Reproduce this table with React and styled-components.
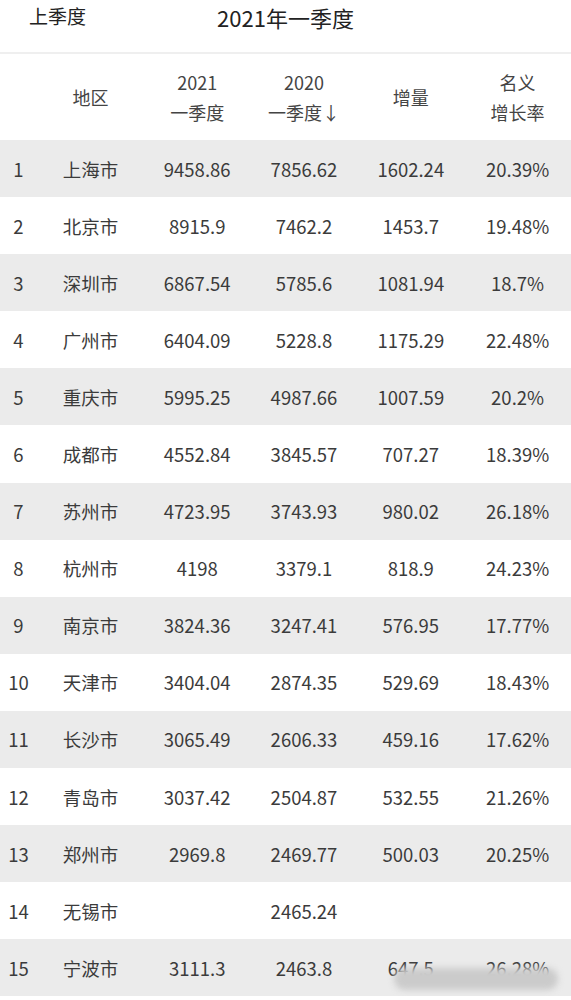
import React from "react"
import styled, { createGlobalStyle } from "styled-components"

const GlobalStyle = createGlobalStyle`
  html, body {
    margin: 0;
    padding: 0;
    background: #fff;
  }
  body {
    font-family: "Noto Sans CJK SC", "Noto Sans", sans-serif;
    color: #333;
  }
`;

const Page = styled.div`
  width: 571px;
  background: #fff;
`;

const TopBar = styled.div`
  position: relative;
  height: 52px;
  display: flex;
  align-items: flex-start;
  justify-content: center;
  border-bottom: 2px solid #efefef;
`;

const PrevLink = styled.span`
  position: absolute;
  left: 29px;
  top: 2px;
  font-size: 19px;
  line-height: 28px;
  color: #222;
`;

const Title = styled.h1`
  margin: 0;
  padding-top: 2px;
  font-size: 22px;
  line-height: 30px;
  font-weight: 400;
  color: #222;
`;

const Grid = styled.div`
  display: grid;
  grid-template-columns: 37px repeat(5, 1fr);
  align-items: center;
  height: ${(p) => p.$h}px;
  background: ${(p) => (p.$shaded ? "#ebebeb" : "#fff")};
`;

const HeadCell = styled.div`
  text-align: center;
  font-size: 18px;
  line-height: 30px;
  color: #444;
  white-space: pre-line;
`;

const Cell = styled.div`
  text-align: center;
  font-size: 18.5px;
  line-height: 26px;
  color: #3b3b3b;
  white-space: nowrap;
`;

const Body = styled.div`
  position: relative;
`;

const Smudge = styled.div`
  position: absolute;
  z-index: 2;
  left: 394px;
  bottom: 6px;
  width: 164px;
  height: 22px;
  border-radius: 11px;
  background: #cbcbcb;
  filter: blur(3px);
`;

const rows = [
  ["1", "上海市", "9458.86", "7856.62", "1602.24", "20.39%"],
  ["2", "北京市", "8915.9", "7462.2", "1453.7", "19.48%"],
  ["3", "深圳市", "6867.54", "5785.6", "1081.94", "18.7%"],
  ["4", "广州市", "6404.09", "5228.8", "1175.29", "22.48%"],
  ["5", "重庆市", "5995.25", "4987.66", "1007.59", "20.2%"],
  ["6", "成都市", "4552.84", "3845.57", "707.27", "18.39%"],
  ["7", "苏州市", "4723.95", "3743.93", "980.02", "26.18%"],
  ["8", "杭州市", "4198", "3379.1", "818.9", "24.23%"],
  ["9", "南京市", "3824.36", "3247.41", "576.95", "17.77%"],
  ["10", "天津市", "3404.04", "2874.35", "529.69", "18.43%"],
  ["11", "长沙市", "3065.49", "2606.33", "459.16", "17.62%"],
  ["12", "青岛市", "3037.42", "2504.87", "532.55", "21.26%"],
  ["13", "郑州市", "2969.8", "2469.77", "500.03", "20.25%"],
  ["14", "无锡市", "", "2465.24", "", ""],
  ["15", "宁波市", "3111.3", "2463.8", "647.5", "26.28%"],
];

const headers = ["", "地区", "2021\n一季度", "2020\n一季度↓", "增量", "名义\n增长率"];

export default function App() {
  return (
    <Page>
      <GlobalStyle />
      <TopBar>
        <PrevLink>上季度</PrevLink>
        <Title>2021年一季度</Title>
      </TopBar>
      <Grid $h={86}>
        {headers.map((h, i) => (
          <HeadCell key={i}>{h}</HeadCell>
        ))}
      </Grid>
      <Body>
        {rows.map((r, i) => (
          <Grid key={r[0]} $h={57.1} $shaded={i % 2 === 0}>
            {r.map((v, j) => (
              <Cell key={j}>{v}</Cell>
            ))}
          </Grid>
        ))}
        <Smudge />
      </Body>
    </Page>
  );
}
